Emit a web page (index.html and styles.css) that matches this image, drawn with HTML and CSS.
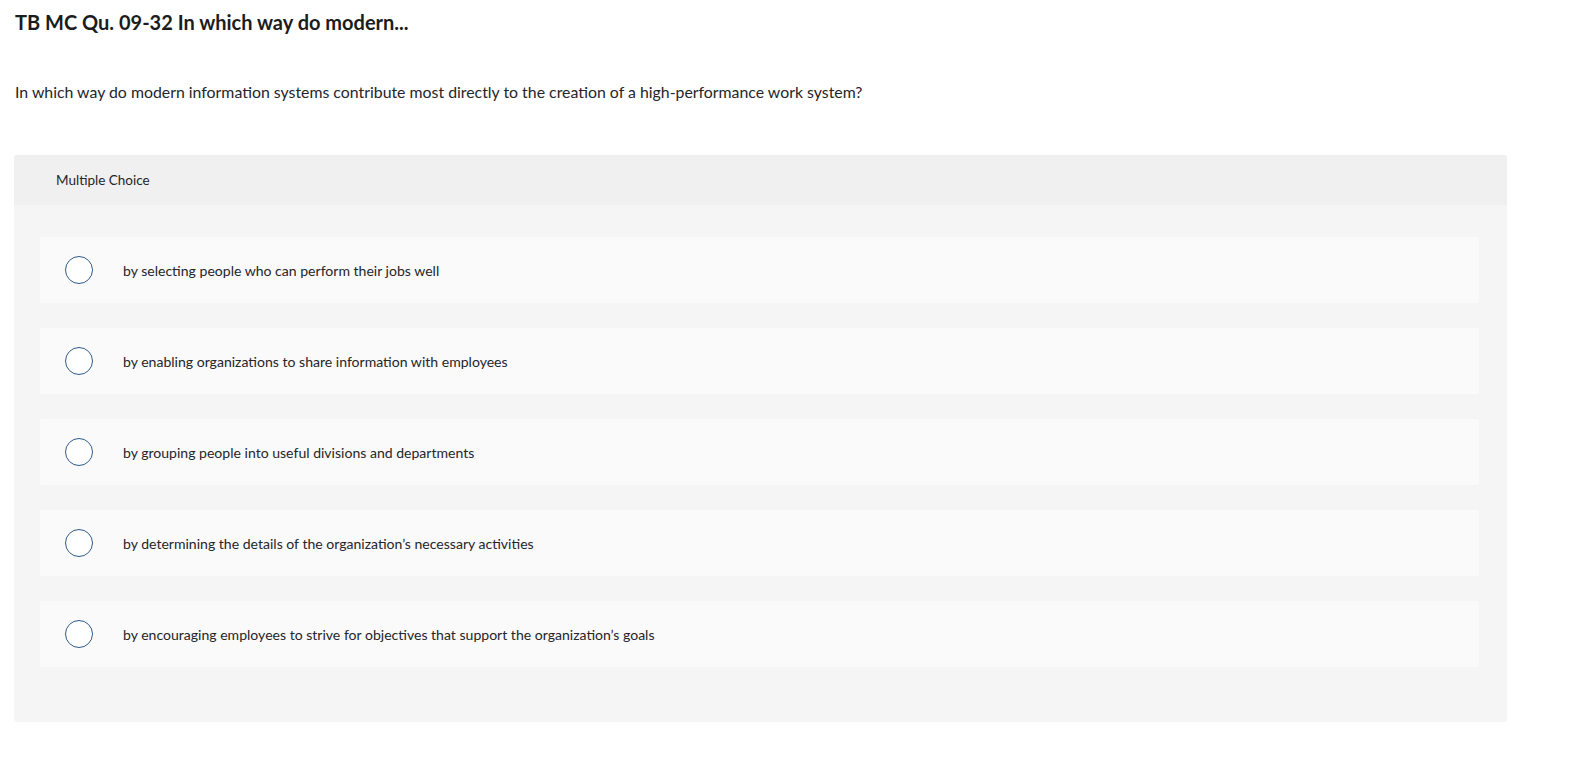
FILE: index.html
```html
<!DOCTYPE html>
<html>
<head>
<meta charset="utf-8">
<link rel="stylesheet" href="styles.css">
</head>
<body>
<div class="page">
  <h1 class="title">TB MC Qu. 09-32 In which way do modern...</h1>
  <p class="question">In which way do modern information systems contribute most directly to the creation of a high-performance work system?</p>
  <div class="card">
    <div class="card-header">Multiple Choice</div>
    <div class="card-body">
      <div class="option"><span class="radio"></span><span class="label">by selecting people who can perform their jobs well</span></div>
      <div class="option"><span class="radio"></span><span class="label">by enabling organizations to share information with employees</span></div>
      <div class="option"><span class="radio"></span><span class="label">by grouping people into useful divisions and departments</span></div>
      <div class="option"><span class="radio"></span><span class="label">by determining the details of the organization’s necessary activities</span></div>
      <div class="option"><span class="radio"></span><span class="label">by encouraging employees to strive for objectives that support the organization’s goals</span></div>
    </div>
  </div>
</div>
</body>
</html>
```

FILE: styles.css
```css
* { box-sizing: border-box; }
html, body { margin: 0; padding: 0; background: #fff; }
body {
  font-family: Lato, "Open Sans", "Liberation Sans", sans-serif;
  color: #1f1f24;
}
.page {
  padding: 10px 74px 0 14px;
}
.title {
  margin: 0;
  padding-left: 1px;
  font-size: 20px;
  font-weight: 700;
  line-height: 24px;
  color: #1c1c1c;
}
.question {
  margin: 0;
  padding-top: 48px;
  padding-left: 1px;
  font-size: 15.85px;
  line-height: 20px;
  color: #25252a;
}
.card {
  margin-top: 53px;
  border-radius: 3px;
  background: #f5f5f5;
  overflow: hidden;
}
.card-header {
  height: 50px;
  background: #f0f0f0;
  padding-left: 42px;
  display: flex;
  align-items: center;
  font-size: 13.5px;
  color: #25252a;
}
.card-body {
  padding: 32px 28px 55px 26px;
  display: flex;
  flex-direction: column;
  gap: 25px;
}
.option {
  height: 66px;
  background: #fafafa;
  border-radius: 3px;
  display: flex;
  align-items: center;
  padding-left: 25px;
}
.radio {
  width: 28px;
  height: 28px;
  border: 1.5px solid #2f5a88;
  border-radius: 50%;
  background: #fff;
  flex: none;
}
.label {
  margin-left: 30px;
  font-size: 14.05px;
  color: #25252a;
}
```
